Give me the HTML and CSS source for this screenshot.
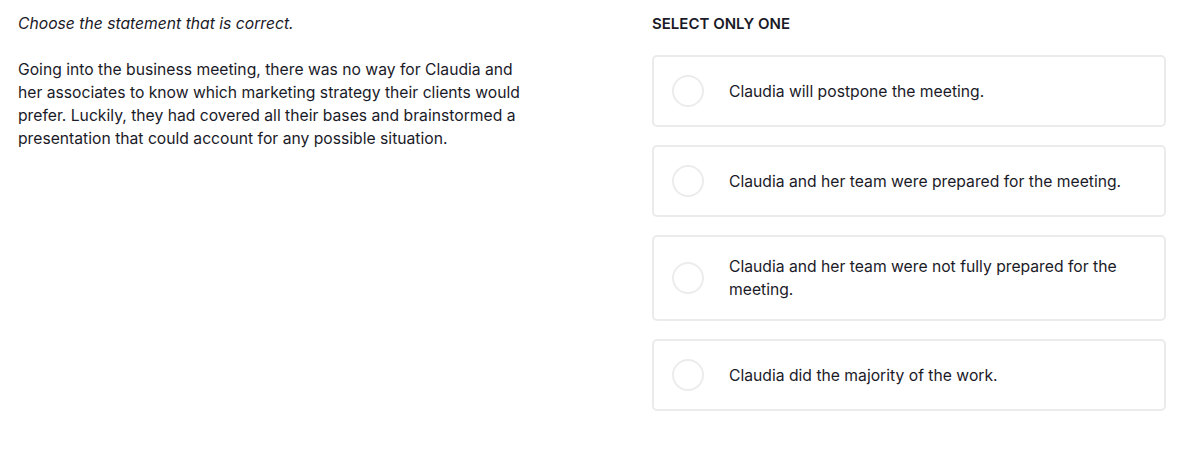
FILE: index.html
```html
<!DOCTYPE html>
<html lang="en">
<head>
<meta charset="utf-8">
<title>Question</title>
<link rel="stylesheet" href="styles.css">
</head>
<body>
<main class="question">
  <section class="prompt">
    <p class="instruction">Choose the statement that is correct.</p>
    <p class="passage">Going into the business meeting, there was no way for Claudia and her associates to know which marketing strategy their clients would prefer. Luckily, they had covered all their bases and brainstormed a presentation that could account for any possible situation.</p>
  </section>
  <section class="answers">
    <h2 class="answers-title">SELECT ONLY ONE</h2>
    <ul class="options">
      <li class="option"><span class="radio"></span><span class="option-text">Claudia will postpone the meeting.</span></li>
      <li class="option"><span class="radio"></span><span class="option-text">Claudia and her team were prepared for the meeting.</span></li>
      <li class="option"><span class="radio"></span><span class="option-text">Claudia and her team were not fully prepared for the meeting.</span></li>
      <li class="option"><span class="radio"></span><span class="option-text">Claudia did the majority of the work.</span></li>
    </ul>
  </section>
</main>
</body>
</html>
```
FILE: styles.css
```css
* { box-sizing: border-box; }
html, body { margin: 0; padding: 0; background: #fff; }
body {
  font-family: Inter, "Liberation Sans", Arial, sans-serif;
  color: #1a1a28;
  font-size: 15.7px;
  line-height: 23px;
}
.question {
  display: grid;
  grid-template-columns: 1fr 514px;
  column-gap: 120px;
  padding: 12px 37px 0 18px;
}
.prompt { max-width: 528px; }
.instruction {
  margin: 0 0 23px;
  font-style: italic;
}
.passage { margin: 0; }
.answers-title {
  margin: 0 0 20px;
  font-size: 15px;
  font-weight: 600;
  line-height: 23px;
}
.options {
  list-style: none;
  margin: 0;
  padding: 0;
  display: flex;
  flex-direction: column;
  gap: 18px;
}
.option {
  display: flex;
  align-items: center;
  border: 2px solid #ebebeb;
  border-radius: 5px;
  padding: 18px 40px 18px 18px;
  min-height: 72px;
}
.radio {
  flex: none;
  width: 32px;
  height: 32px;
  border: 2px solid #ececec;
  border-radius: 50%;
  margin-right: 25px;
}
.option-text { flex: 1; }
```
